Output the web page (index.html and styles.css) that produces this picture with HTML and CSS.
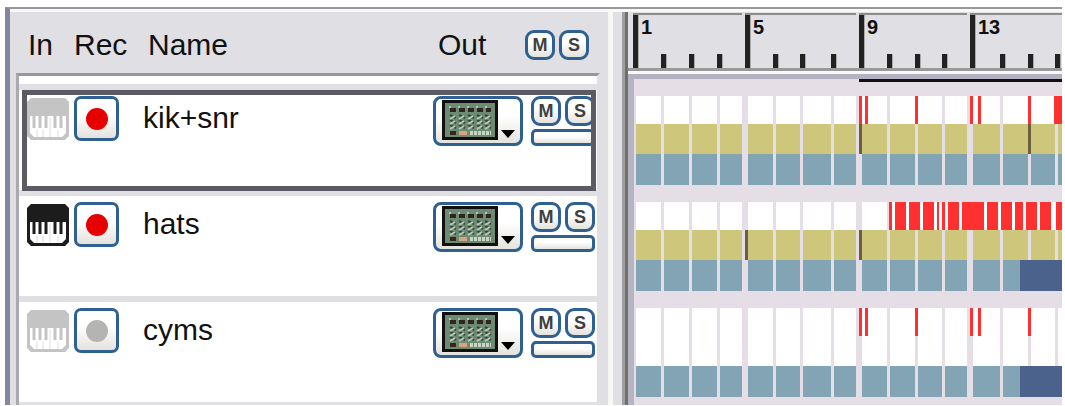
FILE: index.html
```
<!DOCTYPE html>
<html lang="en">
  <head>
    <meta charset="UTF-8" />
    <meta name="viewport" content="width=device-width, initial-scale=1.0" />
    <title>Sequencer</title>
    <link rel="stylesheet" href="styles.css">
  </head>
  <body>
    <!-- shared icons -->
    <svg class="sprite" aria-hidden="true">
      <symbol id="piano" viewBox="0 0 42 42">
        <path d="M4 0h34l4 4v34l-4 4H4l-4-4V4z" fill="currentColor" />
        <path d="M3 18h36v17l-4 4H7l-4-4z" fill="#fff" />
        <path d="M7 18v12M13 18v12M19 18v12M28 18v12M34 18v12" stroke="currentColor" stroke-width="3" />
        <path d="M10 32v7M16 32v7M23 20v19M31 32v7" stroke="#ddd" />
      </symbol>
      <symbol id="mixer" viewBox="0 0 56 40">
        <rect width="56" height="40" fill="#111" />
        <rect x="3" y="3" width="50" height="34" fill="#6d8b73" />
        <path d="M7 7h42" stroke="#b5c4b2" stroke-width="2" stroke-dasharray="2 7" />
        <path d="M8 10h41" stroke="#30251f" stroke-width="4" stroke-dasharray="6 3" />
        <path d="M8 15l6 3M17 15l6 3M26 15l6 3M35 15l6 3M43 15l6 3M8 20l6 3M17 20l6 3M26 20l6 3M35 20l6 3M43 20l6 3M8 25l6 3M17 25l6 3M26 25l6 3M35 25l6 3M43 25l6 3" stroke="#35483c" stroke-width="2" />
        <path d="M8 19l5-3M17 19l5-3M26 19l5-3M35 19l5-3M43 19l5-3M8 24l5-3M17 24l5-3M26 24l5-3M35 24l5-3M43 24l5-3M8 29l5-3M17 29l5-3M26 29l5-3M35 29l5-3M43 29l5-3" stroke="#b9cab8" stroke-width="2" />
        <path d="M8 33h6" stroke="#38251c" stroke-width="4" />
        <path d="M17 33h8" stroke="#dda37c" stroke-width="4" />
        <path d="M28 33h21" stroke="#c8d5c5" stroke-width="4" stroke-dasharray="3 1" />
      </symbol>
    </svg>

    <div class="window">
      <section class="tracks">
        <div class="track-header">
          <span>In</span>
          <span>Rec</span>
          <span>Name</span>
          <span>Out</span>
          <div class="ms">
            <button type="button" class="key" aria-label="Mute all">M</button>
            <button type="button" class="key" aria-label="Solo all">S</button>
          </div>
        </div>
        <ul class="track-list" id="trackList"></ul>
      </section>

      <div class="splitter"></div>

      <section class="timeline">
        <div class="ruler" id="ruler"></div>
        <div class="song" id="song">
          <div class="loop"></div>
        </div>
      </section>
    </div>

    <script>
      // Note positions are [start, width] in pixels from the first bar
      var BARS = 16;
      var hits = [[223, 3], [229, 3], [279, 3], [334, 3], [342, 3], [392, 3]];
      var tracks = [
        {
          name: "kik+snr", input: false, rec: true, selected: true,
          notes: hits.concat([[418, 40]]), marks: [[223, 3], [392, 3]], yellow: true
        },
        {
          name: "hats", input: true, rec: true, filled: true,
          notes: [[253, 3], [259, 11], [273, 11], [287, 11], [301, 2], [306, 3], [312, 11],
            [326, 22], [351, 11], [365, 11], [379, 8], [390, 11], [404, 11], [420, 40]],
          marks: [[109, 3], [223, 3]], yellow: true, clip: 384
        },
        { name: "cyms", input: false, rec: false, notes: hits, marks: [], yellow: false, clip: 384 }
      ];

      function blocks(items, type) {
        return items.map(function (n) {
          return `<i class="${type}" style="left:${n[0]}px;width:${n[1]}px"></i>`;
        }).join("");
      }

      function lane(color, extra) {
        return `<div class="lane ${color}">${"<b></b>".repeat(BARS)}${extra}</div>`;
      }

      var list = document.getElementById("trackList");
      var song = document.getElementById("song");
      var ruler = document.getElementById("ruler");

      tracks.forEach(function (t) {
        list.innerHTML += `
          <li class="track ${t.selected ? "selected" : ""}">
            <svg class="piano ${t.input ? "on" : ""}"><use href="#piano" /></svg>
            <button type="button" class="rec ${t.rec ? "armed" : ""}" aria-label="Record ${t.name}" aria-pressed="${t.rec}"></button>
            <span class="name">${t.name}</span>
            <button type="button" class="out" aria-label="Output of ${t.name}">
              <svg class="mixer"><use href="#mixer" /></svg>
              <svg class="arrow" viewBox="0 0 14 8"><path d="M0 0h14L7 8z" /></svg>
            </button>
            <div class="ms">
              <button type="button" class="key" aria-label="Mute ${t.name}">M</button>
              <button type="button" class="key" aria-label="Solo ${t.name}">S</button>
              <button type="button" class="strip" aria-label="Level of ${t.name}"></button>
            </div>
          </li>`;

        var white = (t.filled ? blocks([[253, 300]], "fill") : "") + blocks(t.notes, "note");
        song.innerHTML += `
          <div class="part">
            ${lane("white", white)}
            ${lane(t.yellow ? "yellow" : "empty", blocks(t.marks, "mark"))}
            ${lane("blue", t.clip ? blocks([[t.clip, 300]], "clip") : "")}
          </div>`;
      });

      for (var i = 0; i < BARS; i++) {
        ruler.innerHTML += `<div class="tick">${i % 4 === 0 ? i + 1 : ""}</div>`;
      }
    </script>
  </body>
</html>
```

FILE: styles.css
```
* {
  box-sizing: border-box;
}

body {
  --bars: 28px 28px 28px 28px 28px 27px 31px 28px 28px 28px 27px 28px 30px 28px 27px 28px;
  margin: 0;
  padding: 7px 3px 1px 5px;
  height: 100vh;
  background-color: #fff;
  color: #111;
  font-family: "Liberation Sans", Arial, sans-serif;
  overflow: hidden;
}

.sprite {
  display: none;
}

.window {
  display: flex;
  height: 100%;
  background-color: #e0dfe3;
  border-top: 2px solid #999;
  border-left: 5px solid #85859f;
  overflow: hidden;
}

/* track list */
.tracks {
  display: flex;
  flex-direction: column;
  flex: 0 0 598px;
  padding: 0 8px 0 6px;
  border-top: 3px solid #f8f8f8;
}

.track-header {
  display: grid;
  grid-template-columns: 46px 74px 1fr 87px 64px;
  align-items: center;
  flex: 0 0 61px;
  padding: 4px 11px 0 12px;
  font-size: 30px;
}

.track-list {
  flex: 1;
  margin: 0;
  padding: 8px 0 0;
  list-style: none;
  background-color: #fff;
  border-top: 3px solid #98979e;
  border-left: 3px solid #aaa9b0;
  border-right: 3px solid #e0dfe3;
  overflow: hidden;
}

.track-list::before {
  content: "";
  display: block;
  height: 6px;
  background-color: #e0dfe3;
}

.track {
  position: relative;
  display: grid;
  grid-template-columns: 47px 69px 1fr 98px 64px;
  align-items: start;
  height: 106px;
  padding: 6px 2px 0 8px;
  border-bottom: 6px solid #e0dfe3;
}

.track.selected::after {
  content: "";
  position: absolute;
  inset: 0 1px -1px 3px;
  border: 5px solid #5c5b63;
}

.piano {
  width: 42px;
  height: 42px;
  margin-top: 2px;
  color: #c4c4c4;
}

.piano.on {
  color: #1c1c1c;
}

.name {
  padding-top: 4px;
  font-size: 30px;
  line-height: 36px;
}

button {
  padding: 0;
  border: 3px solid #2e6092;
  background: linear-gradient(#fff 40%, #e4e2dc);
  color: #3f3f3f;
  font-family: inherit;
}

.rec {
  display: grid;
  place-items: center;
  width: 45px;
  height: 45px;
  border-radius: 7px;
}

.rec::before {
  content: "";
  width: 22px;
  height: 22px;
  border-radius: 50%;
  background-color: #b4b4b2;
}

.rec.armed::before {
  background-color: #e60000;
}

.out {
  display: flex;
  align-items: flex-end;
  gap: 3px;
  width: 90px;
  height: 50px;
  padding: 3px 6px;
  border-radius: 8px;
}

.mixer {
  flex: none;
  width: 56px;
  height: 40px;
}

.arrow {
  flex: none;
  width: 14px;
  height: 8px;
  margin-bottom: 2px;
}

.ms {
  display: grid;
  grid-template-columns: 30px 30px;
  gap: 3px 4px;
}

.key {
  height: 30px;
  border-radius: 9px;
  font-size: 18px;
  font-weight: bold;
  line-height: 24px;
}

.strip {
  grid-column: 1 / 3;
  height: 17px;
  border-radius: 5px;
}

.splitter {
  flex: 0 0 20px;
  border-top: 3px solid #f8f8f8;
  background: linear-gradient(to right, #f7f7f4 5px, #e0dfe6 5px 14px, #a09f9f 14px 17px, #6f706b 17px);
}

/* timeline */
.timeline {
  display: flex;
  flex-direction: column;
  flex: 1;
  min-width: 0;
  padding-top: 3px;
  background: linear-gradient(#f8f8f8 3px, #e0dfe3 3px);
}

.ruler {
  display: grid;
  grid-template-columns: var(--bars);
  flex: 0 0 62px;
  padding: 1px 0 0 5px;
  border-bottom: 3px solid #f8f8f8;
  overflow: hidden;
  box-shadow: inset 0 -3px #999;
}

.tick {
  display: flex;
  align-items: flex-end;
  margin-bottom: 3px;
  border-top: 2px solid #8c8c8c;
}

.tick::before {
  content: "";
  flex: none;
  width: 5px;
  height: 14px;
  border-right: 1px solid #aaa;
  background-color: #222;
}

.tick:nth-child(4n + 1) {
  align-items: flex-start;
  font-size: 20px;
  font-weight: bold;
  line-height: 24px;
}

.tick:nth-child(4n + 1)::before {
  height: 100%;
  margin-right: 2px;
}

.tick:nth-child(4n) {
  margin-right: 3px;
}

.song {
  position: relative;
  flex: 1;
  padding: 17px 0 0 2px;
  background-color: #e5dee6;
  border-top: 5px solid #b2b1c0;
  border-left: 6px solid #b5b4c2;
  overflow: hidden;
}

.loop {
  position: absolute;
  top: 0;
  left: 225px;
  right: 0;
  height: 3px;
  background-color: #111;
}

.part {
  margin-bottom: 17px;
}

.lane {
  position: relative;
  display: grid;
  grid-template-columns: var(--bars);
  height: 30px;
  color: #fff;
}

.lane.white {
  height: 28px;
}

.lane.yellow {
  color: #cec77b;
}

.lane.blue {
  height: 31px;
  color: #83a4b5;
}

.lane b {
  margin-right: 3px;
  background-color: currentColor;
}

.lane b:nth-child(4n) {
  margin-right: 6px;
}

.lane i {
  position: absolute;
  top: 0;
  bottom: 0;
}

.fill {
  background-color: #fff;
}

.note {
  background-color: #ff3030;
}

.mark {
  background-color: #6a6040;
}

.clip {
  background-color: #4a628c;
}
```
